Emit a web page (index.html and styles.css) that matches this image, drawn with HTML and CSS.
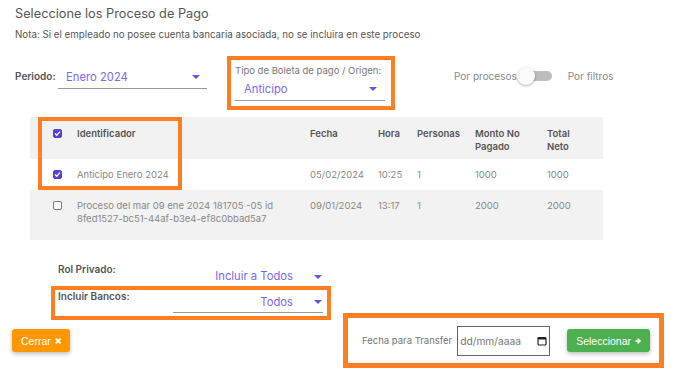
FILE: index.html
```html
<!DOCTYPE html>
<html lang="es">
<head>
  <meta charset="UTF-8" />
  <title>Seleccione los Proceso de Pago</title>
  <link rel="stylesheet" href="styles.css">
</head>
<body>
  <div class="page">
    <h1 class="title">Seleccione los Proceso de Pago</h1>
    <p class="note">Nota: Si el empleado no posee cuenta bancaria asociada, no se incluira en este proceso</p>

    <div class="filters">
      <div class="field-inline">
        <span class="lbl">Periodo:</span>
        <div class="select select-periodo"><span>Enero 2024</span><i class="caret"></i></div>
      </div>
      <div class="mark mark-tipo">
        <div class="small-lbl">Tipo de Boleta de pago / Origen:</div>
        <div class="select select-tipo"><span>Anticipo</span><i class="caret"></i></div>
      </div>
      <div class="switch-group">
        <span>Por procesos</span>
        <span class="switch"><span class="track"></span><span class="knob"></span></span>
        <span>Por filtros</span>
      </div>
    </div>

    <div class="grid-wrap">
      <div class="row head">
        <div><span class="check on"></span></div>
        <div>Identificador</div>
        <div>Fecha</div>
        <div>Hora</div>
        <div>Personas</div>
        <div>Monto No Pagado</div>
        <div>Total Neto</div>
      </div>
      <div class="row r1">
        <div><span class="check on"></span></div>
        <div>Anticipo Enero 2024</div>
        <div>05/02/2024</div>
        <div>10:25</div>
        <div class="num">1</div>
        <div>1000</div>
        <div>1000</div>
      </div>
      <div class="row r2">
        <div><span class="check"></span></div>
        <div>Proceso del mar 09 ene 2024 181705 -05 id 8fed1527-bc51-44af-b3e4-ef8c0bbad5a7</div>
        <div>09/01/2024</div>
        <div>13:17</div>
        <div class="num">1</div>
        <div>2000</div>
        <div>2000</div>
      </div>
      <div class="mark mark-rows"></div>
    </div>

    <div class="extra">
      <div class="extra-row rol">
        <span class="lbl">Rol Privado:</span>
        <div class="select select-right"><span>Incluir a Todos</span><i class="caret"></i></div>
      </div>
      <div class="mark extra-row bancos">
        <span class="lbl">Incluir Bancos:</span>
        <div class="select select-right underline"><span>Todos</span><i class="caret"></i></div>
      </div>
    </div>

    <div class="footer">
      <button class="btn btn-close">Cerrar
        <svg width="8" height="8" viewBox="0 0 10 10"><path d="M2 2 L8 8 M8 2 L2 8" stroke="#fff" stroke-width="2.8" stroke-linecap="round"/></svg>
      </button>
      <div class="mark mark-date">
        <span class="date-lbl">Fecha para Transfer</span>
        <div class="date-input">
          <span>dd/mm/aaaa</span>
          <svg width="10" height="10" viewBox="0 0 10 10"><rect x="1" y="1.5" width="8" height="7.5" rx="1" fill="none" stroke="#222" stroke-width="1.2"/><rect x="1" y="1.5" width="8" height="2" fill="#222"/></svg>
        </div>
        <button class="btn btn-go">Seleccionar
          <svg width="10" height="10" viewBox="0 0 10 10"><path d="M1.5 5 H8 M5 1.6 L8.4 5 L5 8.4" fill="none" stroke="#fff" stroke-width="2.4" stroke-linecap="round" stroke-linejoin="round"/></svg>
        </button>
      </div>
    </div>
  </div>
</body>
</html>
```

FILE: styles.css
```css
body {
  margin: 0;
  background: #fff;
  font-family: Inter, "Noto Sans", sans-serif;
  color: #555;
}

.page {
  width: 678px;
  height: 377px;
  overflow: hidden;
}

.title {
  margin: 0;
  padding: 5px 0 0 15px;
  font-size: 12.75px;
  font-weight: 400;
  line-height: 17px;
  color: #555;
}

.note {
  margin: 7px 0 0 15px;
  font-size: 9.75px;
  line-height: 12px;
  color: #555;
}

/* orange highlight boxes */
.mark {
  border: 4px solid #fd7e23;
  box-sizing: border-box;
}

.caret {
  width: 0;
  height: 0;
  border-left: 4px solid transparent;
  border-right: 4px solid transparent;
  border-top: 4px solid #6a50e0;
}

.select {
  display: flex;
  align-items: center;
  justify-content: space-between;
  box-sizing: border-box;
  color: #7b68ee;
}

.lbl {
  font-size: 10px;
  font-weight: 600;
  color: #555;
}

/* filter row */
.filters {
  display: flex;
  align-items: flex-start;
  margin-top: 15px;
}

.field-inline {
  display: flex;
  align-items: flex-start;
  margin: 9px 0 0 15px;
}

.field-inline .lbl {
  width: 43px;
  line-height: 23px;
}

.select-periodo {
  width: 149px;
  height: 24px;
  padding: 0 7px 0 8px;
  font-size: 11.25px;
  border-bottom: 1px solid #999;
}

.mark-tipo {
  width: 168px;
  margin-left: 20px;
  padding: 5px 6px 5px 4px;
}

.small-lbl {
  font-size: 9.5px;
  line-height: 12px;
  color: #777;
}

.select-tipo {
  width: 150px;
  height: 24px;
  padding: 0 8px 0 9px;
  font-size: 11.25px;
  border-bottom: 1px solid #999;
}

.switch-group {
  display: flex;
  align-items: center;
  margin: 11px 0 0 59px;
  font-size: 10px;
  color: #888;
}

.switch {
  position: relative;
  width: 35px;
  height: 18px;
  margin: 0 16px 0 0;
}

.track {
  position: absolute;
  left: 2px;
  top: 4px;
  width: 33px;
  height: 10px;
  border-radius: 5px;
  background: #bdbdbd;
}

.knob {
  position: absolute;
  left: 0;
  top: 0;
  width: 18px;
  height: 18px;
  border-radius: 50%;
  background: #fafafa;
  box-shadow: 0 1px 3px rgba(0, 0, 0, 0.3);
}

/* table */
.grid-wrap {
  position: relative;
  width: 573px;
  margin: 7px 0 0 30px;
  font-size: 9.5px;
  line-height: 13px;
}

.row {
  display: grid;
  grid-template-columns: 47px 233px 68px 39px 58px 72px 56px;
  box-sizing: border-box;
  color: #888;
}

.row > div {
  padding-right: 8px;
}

.row > div:first-child {
  padding-left: 23px;
}

.row > div:last-child {
  padding-right: 16px;
}

.head {
  height: 42px;
  padding-top: 10px;
  background: #f2f2f2;
  font-weight: 600;
  color: #555;
}

.r1 {
  height: 31px;
  padding-top: 9px;
  background: #fff;
}

.r2 {
  height: 50px;
  padding-top: 9px;
  background: #f2f2f2;
}

.num {
  color: #7986cb;
}

.check {
  display: inline-block;
  width: 9px;
  height: 9px;
  margin-top: 2px;
  border: 1px solid #777;
  border-radius: 2px;
  background: #fff;
  box-sizing: border-box;
}

.check.on {
  border-color: #5a3fd4;
  background: #5a3fd4 url("data:image/svg+xml;utf8,<svg xmlns='http://www.w3.org/2000/svg' viewBox='0 0 9 9'><path d='M2 4.6 L3.8 6.3 L7 2.6' fill='none' stroke='white' stroke-width='1.4'/></svg>") no-repeat center / 9px 9px;
}

.mark-rows {
  position: absolute;
  left: 8px;
  top: 0;
  width: 144px;
  height: 73px;
}

/* bottom selects */
.extra {
  margin: 22px 0 0 51px;
  width: 280px;
}

.extra-row {
  display: flex;
  align-items: flex-start;
  padding: 0 4px 0 3px;
}

.extra-row .lbl {
  width: 115px;
  line-height: 14px;
}

.rol {
  height: 24px;
  padding-left: 7px;
}

.select-right {
  width: 150px;
  justify-content: flex-end;
  gap: 21px;
  padding-right: 1px;
  font-size: 11.25px;
}

.rol .select-right {
  padding-top: 8px;
  line-height: 13px;
}

.bancos {
  height: 34px;
}

.bancos .lbl {
  line-height: 12px;
}

.select-right.underline {
  height: 23px;
  padding-top: 2px;
  border-bottom: 1px solid #999;
}

/* footer */
.footer {
  display: flex;
  align-items: center;
  justify-content: space-between;
  margin-top: -7px;
  padding: 0 14px 0 12px;
}

.btn {
  display: flex;
  align-items: center;
  gap: 4px;
  height: 23px;
  flex-shrink: 0;
  border: none;
  border-radius: 3px;
  color: #fff;
  font-family: "Liberation Sans", Arial, sans-serif;
  font-size: 10.5px;
  box-shadow: 0 2px 4px rgba(0, 0, 0, 0.25);
}

.btn-close {
  width: 58px;
  padding: 0 9px;
  background: #ff9800;
}

.btn-go {
  width: 83px;
  padding: 0 9px;
  background: #4caf50;
}

.mark-date {
  display: flex;
  align-items: center;
  width: 321px;
  height: 55px;
  border-width: 5px;
  padding: 0 9px 0 14px;
}

.date-lbl {
  flex-shrink: 0;
  white-space: nowrap;
  font-size: 9.5px;
  color: #777;
  margin-right: 5px;
}

.date-input {
  display: flex;
  align-items: center;
  justify-content: space-between;
  flex-shrink: 0;
  width: 93px;
  height: 30px;
  box-sizing: border-box;
  padding: 0 2px 0 2px;
  border: 1px solid #666;
  font-size: 10.25px;
  color: #777;
  margin-right: 17px;
}
```
